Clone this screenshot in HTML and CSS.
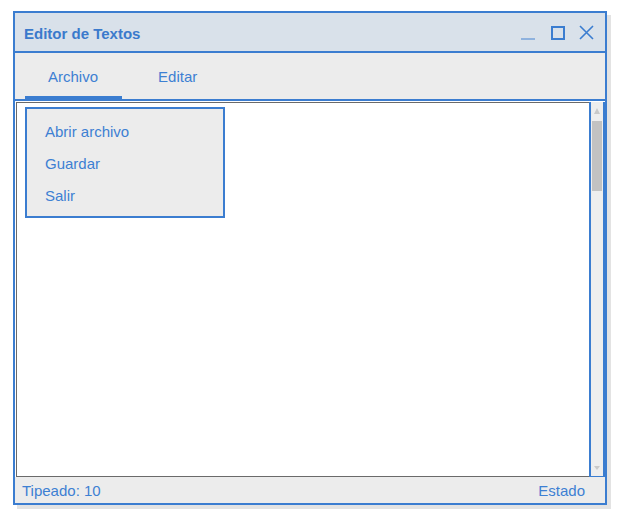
FILE: index.html
```html
<!DOCTYPE html>
<html lang="es">
<head>
<meta charset="utf-8">
<title>Editor de Textos</title>
<link rel="stylesheet" href="styles.css">
</head>
<body>
<div class="window">
  <div class="titlebar">
    <span class="title">Editor de Textos</span>
    <div class="controls">
      <svg class="ctl ctl-min" width="14" height="14" viewBox="0 0 14 14"><rect x="0" y="12" width="14" height="2" fill="#8fb2de"/></svg>
      <svg class="ctl ctl-max" width="14" height="14" viewBox="0 0 14 14"><rect x="1" y="1" width="12" height="12" fill="none" stroke="#3b7dd0" stroke-width="2"/></svg>
      <svg class="ctl ctl-close" width="15" height="15" viewBox="0 0 15 15"><path d="M1 1 L14 14 M14 1 L1 14" stroke="#3b7dd0" stroke-width="1.6" fill="none"/></svg>
    </div>
  </div>
  <div class="menubar">
    <div class="tab active">Archivo</div>
    <div class="tab">Editar</div>
  </div>
  <div class="main">
    <div class="editor"></div>
    <div class="scrollbar">
      <div class="arrow up"></div>
      <div class="track"><div class="thumb"></div></div>
      <div class="arrow down"></div>
    </div>
    <div class="dropdown">
      <div class="item">Abrir archivo</div>
      <div class="item">Guardar</div>
      <div class="item">Salir</div>
    </div>
  </div>
  <div class="statusbar">
    <span>Tipeado: 10</span>
    <span>Estado</span>
  </div>
</div>
</body>
</html>
```
FILE: styles.css
```css
* { box-sizing: border-box; }
html, body { margin: 0; padding: 0; background: #fff; }
body {
  font-family: "Liberation Sans", Arial, sans-serif;
  color: #3b7dd0;
  width: 617px;
  height: 514px;
  overflow: hidden;
}
.window {
  margin: 11px 0 0 13px;
  width: 594px;
  height: 494px;
  border: 2px solid #3b7dd0;
  box-shadow: 4px 4px 0 #e3e3e3;
  display: flex;
  flex-direction: column;
  background: #ececec;
}
.titlebar {
  height: 40px;
  flex: none;
  background: #d9e1ea;
  border-bottom: 2px solid #3b7dd0;
  display: flex;
  align-items: center;
  padding: 0 11px 0 9px;
}
.title {
  font-weight: bold;
  font-size: 15px;
  color: #3b7acc;
  flex: 1;
  padding-top: 3px;
}
.controls { display: flex; align-items: center; padding-top: 1px; }
.ctl { display: block; }
.ctl-max { margin-left: 16px; }
.ctl-close { margin-left: 14px; }
.menubar {
  height: 48px;
  flex: none;
  border-bottom: 2px solid #3b7dd0;
  background: #ececec;
  display: flex;
  padding-left: 10px;
  gap: 13px;
}
.tab {
  font-size: 15px;
  color: #3d80d3;
  padding: 2px 24px 0 23px;
  line-height: 44px;
  height: 46px;
  border-bottom: 3px solid transparent;
}
.tab.active { border-bottom-color: #3b7dd0; }
.main {
  flex: 1;
  display: flex;
  padding: 1px 0 0 1px;
  position: relative;
  background: #fff;
}
.editor {
  flex: 1;
  background: #fff;
  border: 1px solid #6a6a6a;
  border-right: none;
}
.scrollbar {
  width: 16px;
  flex: none;
  border-left: 2px solid #3b7dd0;
  border-right: 2px solid #3b7dd0;
  border-bottom: 1px solid #3b7dd0;
  background: #eeeeee;
  display: flex;
  flex-direction: column;
  align-items: center;
}
.arrow {
  width: 0; height: 0;
  flex: none;
  border-left: 3px solid transparent;
  border-right: 3px solid transparent;
}
.arrow.up { border-bottom: 6px solid #c9c9c9; margin-top: 6px; }
.arrow.down { border-top: 4px solid #c9c9c9; margin-bottom: 6px; }
.track { flex: 1; width: 100%; padding: 7px 1px 0 1px; }
.thumb { height: 70px; background: #c2c2c2; }
.dropdown {
  position: absolute;
  left: 10px;
  top: 6px;
  width: 200px;
  height: 111px;
  background: #ececec;
  border: 2px solid #3b7dd0;
  padding: 7px 0 4px 18px;
}
.item {
  font-size: 15px;
  line-height: 32px;
  height: 32px;
  color: #3d80d3;
}
.statusbar {
  height: 26px;
  flex: none;
  background: #ececec;
  display: flex;
  justify-content: space-between;
  align-items: center;
  padding: 1px 20px 0 7px;
  font-size: 15px;
  color: #3d80d3;
}
```
